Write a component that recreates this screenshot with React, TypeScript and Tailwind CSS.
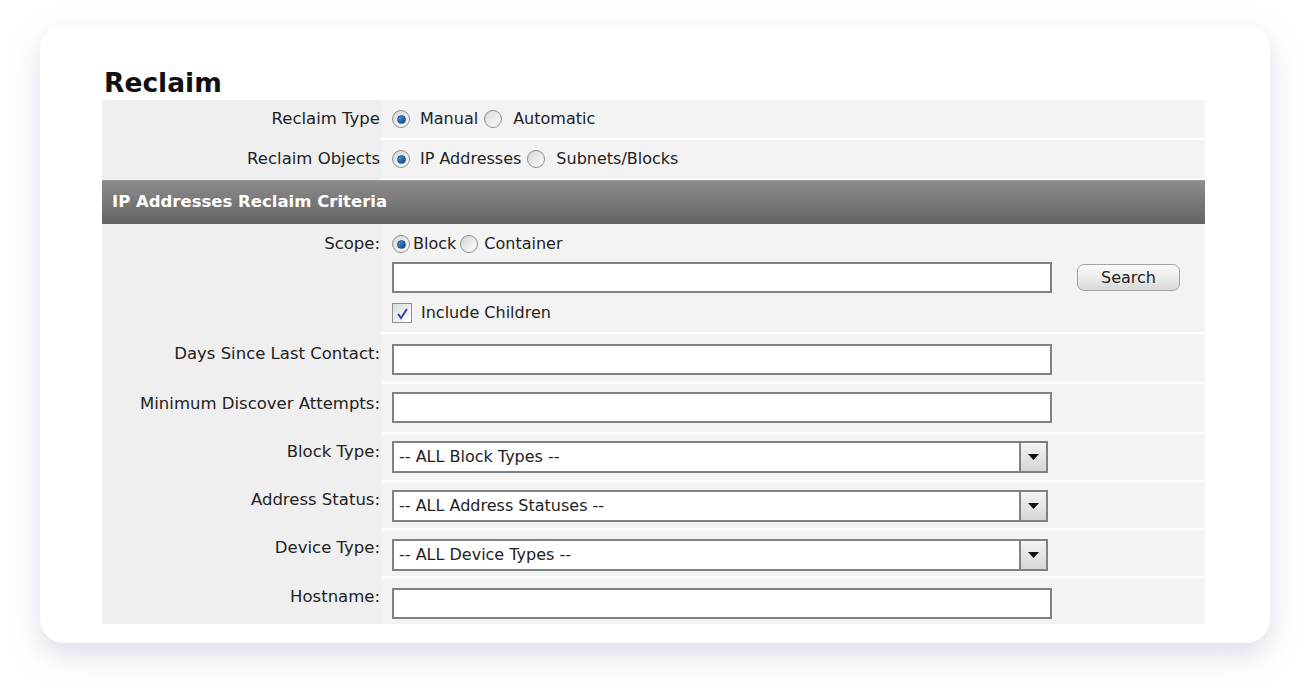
import React from 'react';

const font = { fontFamily: '"DejaVu Sans", Tahoma, Verdana, sans-serif' };

// Classic XP-ish radio button
const Radio = ({ checked }: { checked?: boolean }) => (
  <span className="flex w-[18px] h-[18px] items-center justify-center rounded-full border border-[#8d8f91] bg-gradient-to-br from-[#d6d6d6] to-[#ffffff] shrink-0">
    {checked && (
      <span className="w-[9px] h-[9px] rounded-full bg-gradient-to-br from-[#5aa0e0] to-[#0b3f80] border border-[#1b4c8a]" />
    )}
  </span>
);

const Checkbox = () => (
  <span className="flex w-[20px] h-[20px] items-center justify-center border border-[#8d8f91] bg-gradient-to-br from-[#dcdcdc] to-[#ffffff] shrink-0">
    <svg width="13" height="13" viewBox="0 0 13 13">
      <path d="M2 7 L5 11 L11 2" fill="none" stroke="#2a4fa8" strokeWidth="2" />
    </svg>
  </span>
);

const TextInput = () => <div className="h-[31px] w-[660px] bg-white border-2 border-[#7c8287]" />;

const Select = ({ text }: { text: string }) => (
  <div className="h-[32px] w-[656px] bg-white border-2 border-[#7c8287] flex items-center">
    <span className="flex-1 pl-[5px] text-[16px] text-[#222]">{text}</span>
    <span className="w-[27px] h-[28px] border-l-2 border-[#7c8287] bg-gradient-to-b from-[#f4f4f4] to-[#d6d6d6] flex items-center justify-center">
      <svg width="11" height="7" viewBox="0 0 11 7">
        <path d="M0 0 H11 L5.5 6 Z" fill="#111" />
      </svg>
    </span>
  </div>
);

const Row = ({
  label,
  children,
  height,
  labelPad = 'pt-[10px]',
  valuePad = 'pt-[10px]',
  last = false,
}: {
  label: string;
  children: React.ReactNode;
  height: string;
  labelPad?: string;
  valuePad?: string;
  last?: boolean;
}) => (
  <div className={`flex ${height}`}>
    <div className={`w-[279px] shrink-0 bg-[#efefef] text-right pr-[1px] text-[16.5px] text-[#222] leading-[22px] ${labelPad}`}>
      {label}
    </div>
    <div className={`flex-1 bg-[#f3f3f3] pl-[11px] ${last ? '' : 'border-b-2 border-white'} ${valuePad}`}>{children}</div>
  </div>
);

export default function App() {
  return (
    <div className="min-h-[700px] bg-white pt-[25px] pl-[40px]" style={font}>
      <div className="w-[1230px] h-[618px] bg-white rounded-[24px] shadow-[0_12px_30px_rgba(150,160,190,0.35)] pl-[62px] pt-[41px]">
        <h1 className="text-[26.5px] font-bold text-[#111] leading-[34px] pl-[2px]">Reclaim</h1>
        <div className="w-[1103px]">
          <Row label="Reclaim Type" height="h-[40px]" labelPad="pt-[8px]" valuePad="pt-[9px]">
            <div className="flex items-center text-[16px] text-[#222] h-[20px]">
              <Radio checked />
              <span className="ml-[10px]">Manual</span>
              <span className="ml-[6px] flex"><Radio /></span>
              <span className="ml-[11px]">Automatic</span>
            </div>
          </Row>
          <Row label="Reclaim Objects" height="h-[40px]" labelPad="pt-[8px]" valuePad="pt-[9px]">
            <div className="flex items-center text-[16px] text-[#222] h-[20px]">
              <Radio checked />
              <span className="ml-[10px]">IP Addresses</span>
              <span className="ml-[6px] flex"><Radio /></span>
              <span className="ml-[11px]">Subnets/Blocks</span>
            </div>
          </Row>
          <div className="h-[44px] bg-gradient-to-b from-[#8c8c8c] to-[#646464] border-t border-[#9a9a9a] flex items-center pl-[10px]">
            <span className="text-white font-bold text-[16.5px]">IP Addresses Reclaim Criteria</span>
          </div>
          <Row label="Scope:" height="h-[110px]" labelPad="pt-[9px]" valuePad="pt-[10px]">
            <div className="flex items-center text-[16px] text-[#222] h-[20px]">
              <Radio checked />
              <span className="ml-[3px]">Block</span>
              <span className="ml-[4px] flex"><Radio /></span>
              <span className="ml-[6px]">Container</span>
            </div>
            <div className="flex items-center mt-[8px]">
              <TextInput />
              <button className="ml-[25px] w-[103px] h-[27px] rounded-[7px] border border-[#a3a3a3] bg-gradient-to-b from-[#fafafa] via-[#ececec] to-[#d8d8d8] text-[16px] text-[#222]">
                Search
              </button>
            </div>
            <div className="flex items-center mt-[8px] text-[16px] text-[#222]">
              <Checkbox />
              <span className="ml-[9px]">Include Children</span>
            </div>
          </Row>
          <Row label="Days Since Last Contact:" height="h-[50px]" labelPad="pt-[9px]">
            <TextInput />
          </Row>
          <Row label="Minimum Discover Attempts:" height="h-[50px]" labelPad="pt-[9px]" valuePad="pt-[8px]">
            <TextInput />
          </Row>
          <Row label="Block Type:" height="h-[48px]" labelPad="pt-[7px]" valuePad="pt-[7px]">
            <Select text="-- ALL Block Types --" />
          </Row>
          <Row label="Address Status:" height="h-[48px]" labelPad="pt-[7px]" valuePad="pt-[8px]">
            <Select text="-- ALL Address Statuses --" />
          </Row>
          <Row label="Device Type:" height="h-[48px]" labelPad="pt-[7px]" valuePad="pt-[9px]">
            <Select text="-- ALL Device Types --" />
          </Row>
          <Row label="Hostname:" height="h-[46px]" labelPad="pt-[8px]" valuePad="pt-[10px]" last>
            <TextInput />
          </Row>
        </div>
      </div>
    </div>
  );
}
